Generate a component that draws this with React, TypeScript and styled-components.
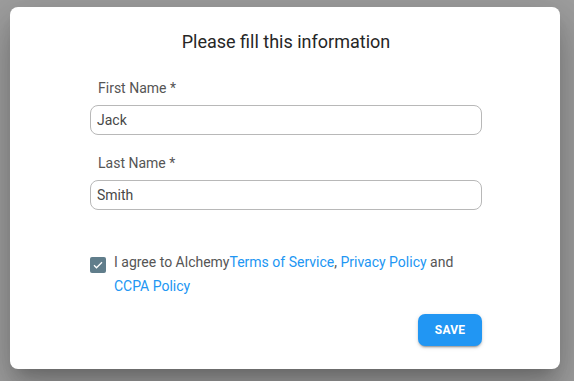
import React from "react";
import styled, { createGlobalStyle } from "styled-components";

const Global = createGlobalStyle`
  html, body { margin: 0; padding: 0; }
  body {
    background: #9f9f9f;
    font-family: Roboto, "Liberation Sans", Arial, sans-serif;
    width: 574px;
    height: 381px;
    overflow: hidden;
  }
`;

const Backdrop = styled.div`
  padding: 7px 0 0 10px;
`;

const Dialog = styled.div`
  width: 550px;
  box-sizing: border-box;
  background: #fff;
  border-radius: 8px;
  padding: 23px 78px 23px 80px;
  display: flex;
  flex-direction: column;
  box-shadow: 0 11px 15px -7px rgba(0,0,0,0.2), 0 24px 38px 3px rgba(0,0,0,0.14), 0 9px 46px 8px rgba(0,0,0,0.12);
`;

const Title = styled.h2`
  margin: 0 0 24px;
  font-size: 18px;
  line-height: 24px;
  font-weight: 400;
  color: #262626;
  text-align: center;
`;

const Field = styled.div<{ $gap?: number }>`
  display: flex;
  flex-direction: column;
  gap: 7px;
  margin-bottom: ${(p) => p.$gap ?? 0}px;
`;

const Label = styled.label`
  font-size: 14px;
  line-height: 20px;
  color: #555;
  padding-left: 8px;
`;

const Input = styled.input`
  box-sizing: border-box;
  height: 30px;
  width: 100%;
  border: 1px solid #b8b8b8;
  border-radius: 8px;
  padding: 0 6px;
  font-family: inherit;
  font-size: 14px;
  color: #484848;
  outline: none;
  background: #fff;
`;

const AgreeRow = styled.div`
  display: flex;
  align-items: flex-start;
  gap: 8px;
  margin-top: 40px;
`;

const Box = styled.span`
  flex: none;
  width: 16px;
  height: 16px;
  margin-top: 7px;
  border-radius: 2px;
  background: #607d8b;
  display: flex;
  align-items: center;
  justify-content: center;
`;

const AgreeText = styled.p`
  margin: 0;
  font-size: 14px;
  line-height: 24px;
  color: #555;
`;

const Link = styled.a`
  color: #2196f3;
  text-decoration: none;
`;

const Actions = styled.div`
  display: flex;
  justify-content: flex-end;
  margin-top: 16px;
`;

const SaveButton = styled.button`
  width: 64px;
  height: 32px;
  border: none;
  border-radius: 7px;
  background: #2196f3;
  color: #fff;
  font-family: inherit;
  font-weight: 700;
  font-size: 12px;
  letter-spacing: 0.2px;
  box-shadow: 0 3px 1px -2px rgba(0,0,0,0.2), 0 2px 2px 0 rgba(0,0,0,0.14), 0 1px 5px 0 rgba(0,0,0,0.12);
  cursor: pointer;
`;

export default function App() {
  return (
    <>
      <Global />
      <Backdrop>
        <Dialog>
          <Title>Please fill this information</Title>
          <Field $gap={18}>
            <Label>First Name *</Label>
            <Input defaultValue="Jack" />
          </Field>
          <Field>
            <Label>Last Name *</Label>
            <Input defaultValue="Smith" />
          </Field>
          <AgreeRow>
            <Box>
              <svg width="12" height="12" viewBox="0 0 24 24" fill="none">
                <path d="M4 12.5l5 5L20 6.5" stroke="#fff" strokeWidth="2.6" />
              </svg>
            </Box>
            <AgreeText>
              I agree to Alchemy<Link>Terms of Service</Link>, <Link>Privacy Policy</Link> and{" "}
              <Link>CCPA Policy</Link>
            </AgreeText>
          </AgreeRow>
          <Actions>
            <SaveButton>SAVE</SaveButton>
          </Actions>
        </Dialog>
      </Backdrop>
    </>
  );
}
